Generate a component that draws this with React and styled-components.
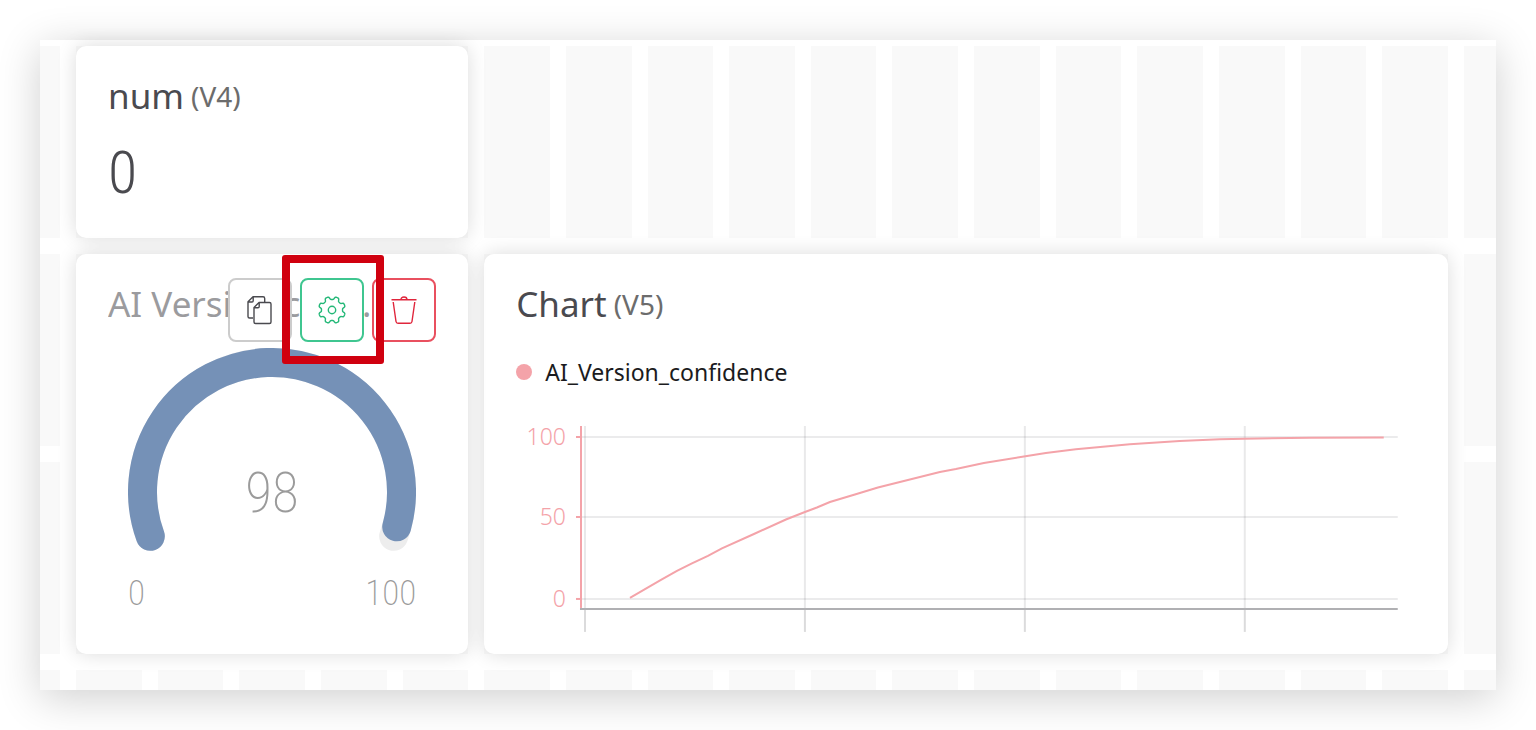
import React from 'react'
import styled, { createGlobalStyle } from 'styled-components'

const GlobalStyle = createGlobalStyle`
  * {
    box-sizing: border-box;
  }

  body {
    margin: 0;
    background: #fff;
    color: #4a4a4f;
    font-family: 'Noto Sans', 'Open Sans', sans-serif;
  }
`

const COLUMNS = 19
const ROWS = 4

const Page = styled.main`
  padding: 40px;
`

const Board = styled.div`
  display: grid;
  grid-template-columns: 20px repeat(17, minmax(0, 1fr)) 32px;
  grid-template-rows: 192px 192px 192px 20px;
  gap: 16px;
  padding-top: 6px;
  background: #fff;
  box-shadow: 0 8px 40px rgba(0, 0, 0, 0.19);
`

const Cell = styled.div`
  grid-column: ${props => props.$column};
  grid-row: ${props => props.$row};
  background: #f9f9f9;
`

const Card = styled.section`
  position: relative;
  display: flex;
  flex-direction: column;
  grid-column: ${props => props.$columns};
  grid-row: ${props => props.$rows};
  min-width: 0;
  padding: 24px 32px;
  border-radius: 10px;
  background: #fff;
  box-shadow: 0 0 20px rgba(0, 0, 0, 0.14);
`

const Title = styled.h2`
  display: flex;
  align-items: center;
  gap: 7px;
  height: 52px;
  margin: 0;
  font-size: 35px;
  font-weight: 400;
  line-height: 52px;
  white-space: nowrap;
  opacity: ${props => props.$faded ? 0.55 : 1};
`

const Pin = styled.span`
  color: #6c6c6c;
  font-size: 28px;
`

const Value = styled.div`
  margin-top: 19px;
  font-family: 'Roboto Condensed', 'Liberation Sans Narrow', sans-serif;
  font-size: 60px;
  font-weight: 300;
  line-height: 64px;
`

const GaugeBox = styled.div`
  display: flex;
  flex-direction: column;
  align-self: center;
  width: 288px;
  margin-top: 18px;

  svg {
    display: block;
  }
`

const GaugeLabels = styled.div`
  display: flex;
  justify-content: space-between;
  margin-top: 20px;
  color: #9b9b9b;
  font-family: 'Roboto Condensed', 'Liberation Sans Narrow', sans-serif;
  font-size: 35px;
  font-weight: 200;
  line-height: 44px;
`

const GaugeValue = styled.text`
  fill: #9b9b9b;
  font-family: 'Roboto Condensed', 'Liberation Sans Narrow', sans-serif;
  font-size: 55px;
  font-weight: 200;
`

const Actions = styled.div`
  position: absolute;
  top: 24px;
  right: 32px;
  display: flex;
  gap: 8px;
`

const ActionButton = styled.button`
  display: flex;
  align-items: center;
  justify-content: center;
  width: 64px;
  height: 64px;
  padding: 0;
  border: 2px solid ${props => props.$border};
  border-radius: 8px;
  background: #fff;
  color: ${props => props.$color};
  cursor: pointer;
`

const Highlight = styled.div`
  position: absolute;
  top: 1px;
  right: 84px;
  width: 102px;
  height: 109px;
  border: 8px solid #d0000f;
  border-radius: 3px;
  pointer-events: none;
`

const Legend = styled.div`
  display: flex;
  align-items: center;
  gap: 13px;
  margin-top: 24px;
  color: #1b1b20;
  font-size: 23px;
  line-height: 36px;

  &::before {
    content: '';
    width: 16px;
    height: 16px;
    border-radius: 50%;
    background: #f4a3a9;
  }
`

const Plot = styled.svg`
  display: block;
  width: 100%;
  height: 220px;
  margin-top: 30px;
  overflow: visible;

  text {
    fill: #f4a3a9;
    font-size: 23px;
    font-weight: 300;
    text-anchor: end;
  }
`

const CopyIcon = () => (
  <svg width='28' height='30' viewBox='0 0 28 30' fill='none' stroke='currentColor' strokeWidth='1.4' strokeLinejoin='round' aria-hidden='true'>
    <path d='M7 23H3.500Q2 23 2 21.500V6.800L7 1.700H17Q18.700 1.700 18.700 3.400V7M2.200 7H6Q7.200 7 7.200 5.800V2' />
    <path d='M13 7.500H23.500Q25 7.500 25 9V27Q25 28.500 23.500 28.500H9.500Q8 28.500 8 27V12.500ZM8.200 12.800H12Q13.200 12.800 13.200 11.600V7.800' />
  </svg>
)

const gearPath = () => {
  const points = []
  for (let i = 0; i < 160; i++) {
    const angle = (i / 160) * Math.PI * 2
    const wave = Math.tanh(2.2 * Math.cos(8 * (angle - Math.PI / 8)))
    const radius = 12 + 1.5 * wave
    points.push(`${(15 + radius * Math.cos(angle)).toFixed(2)} ${(15 + radius * Math.sin(angle)).toFixed(2)}`)
  }
  return `M${points.join('L')}Z`
}

const GearIcon = () => (
  <svg width='30' height='30' viewBox='0 0 30 30' fill='none' stroke='currentColor' strokeWidth='1.4' strokeLinejoin='round' aria-hidden='true'>
    <path d={gearPath()} />
    <circle cx='15' cy='15' r='3.700' />
  </svg>
)

const TrashIcon = () => (
  <svg width='28' height='30' viewBox='0 0 28 30' fill='none' stroke='currentColor' strokeWidth='1.4' strokeLinejoin='round' aria-hidden='true'>
    <path d='M1.500 4.700H26.500M11 4.700Q11 2 14 2Q17 2 17 4.700M3.200 7L6 26.500Q6.300 28.300 8 28.300H20Q21.700 28.300 22 26.500L24.800 7' />
  </svg>
)

const polar = (degrees) => {
  const angle = degrees * Math.PI / 180
  return `${(144 + 129.5 * Math.cos(angle)).toFixed(2)} ${(144 + 129.5 * Math.sin(angle)).toFixed(2)}`
}

const Gauge = ({ value, min, max }) => {
  const end = 160 + 220 * (value - min) / (max - min)

  return <GaugeBox>
    <svg width='288' height='204' viewBox='0 0 288 204' fill='none' strokeWidth='29' strokeLinecap='round'>
      <path d={`M${polar(160)}A129.500 129.500 0 1 1 ${polar(380)}`} stroke='#ededed' />
      <path d={`M${polar(160)}A129.500 129.500 0 1 1 ${polar(end)}`} stroke='#7591b7' />
      <GaugeValue x='144' y='164' textAnchor='middle'>{value}</GaugeValue>
    </svg>
    <GaugeLabels>
      <span>{min}</span>
      <span>{max}</span>
    </GaugeLabels>
  </GaugeBox>
}

const series = [
  [114, 178], [145, 160], [161, 151], [176, 143.5], [192, 136], [206, 128.5],
  [238, 114], [270, 99.5], [289, 92], [301, 87.5], [314, 82], [339, 74.5],
  [362, 67.5], [392, 60], [424, 52], [440, 49], [468, 43], [508, 36.5],
  [530, 33], [560, 29.3], [614, 24.3], [664, 21], [704, 19.3], [729, 18.7],
  [794, 17.8], [868, 17.5]
]

const ticks = [
  { label: '100', y: 17 },
  { label: '50', y: 97 },
  { label: '0', y: 179 }
]

const Chart = () => (
  <Plot viewBox='0 0 900 220' preserveAspectRatio='xMinYMin meet' role='img' aria-label='AI_Version_confidence'>
    {ticks.map(tick => (
      <g key={tick.label}>
        <text x='50' y={tick.y + 8}>{tick.label}</text>
        <path d={`M66 ${tick.y}H882`} stroke='#ebebec' strokeWidth='2' />
        <path d={`M60 ${tick.y}H65`} stroke='#f4a3a9' strokeWidth='2' />
      </g>
    ))}
    {[69, 289, 509, 729].map(x => (
      <g key={x} stroke='#4a4a4f' strokeWidth='2'>
        <path d={`M${x} 6V188`} strokeOpacity='0.12' />
        <path d={`M${x} 188V212`} strokeOpacity='0.2' />
      </g>
    ))}
    <path d='M64 189H882' stroke='#b0b0b3' strokeWidth='2' />
    <path d='M65 6V188' stroke='#f4a3a9' strokeWidth='2' />
    <polyline points={series.map(point => point.join(',')).join(' ')} fill='none' stroke='#f4a3a9' strokeWidth='2' />
  </Plot>
)

const cells = []
for (let row = 1; row <= ROWS; row++) {
  for (let column = 1; column <= COLUMNS; column++) {
    cells.push({ row, column })
  }
}

const App = () => {
  return <Page>
    <GlobalStyle />
    <Board>
      {cells.map(({ row, column }) => (
        <Cell key={`${row}-${column}`} $row={row} $column={column} />
      ))}
      <Card $columns='2 / span 5' $rows='1'>
        <Title>num <Pin>(V4)</Pin></Title>
        <Value>0</Value>
      </Card>
      <Card $columns='7 / span 12' $rows='2 / span 2'>
        <Title>Chart <Pin>(V5)</Pin></Title>
        <Legend>AI_Version_confidence</Legend>
        <Chart />
      </Card>
      <Card $columns='2 / span 5' $rows='2 / span 2'>
        <Title $faded>AI Version con...</Title>
        <Gauge value={98} min={0} max={100} />
        <Actions>
          <ActionButton $border='#cccccc' $color='#4a4a4f' aria-label='Duplicate'>
            <CopyIcon />
          </ActionButton>
          <ActionButton $border='#3fc690' $color='#24b878' aria-label='Settings'>
            <GearIcon />
          </ActionButton>
          <ActionButton $border='#e9505f' $color='#e0263c' aria-label='Delete'>
            <TrashIcon />
          </ActionButton>
        </Actions>
        <Highlight />
      </Card>
    </Board>
  </Page>
}

export default App
